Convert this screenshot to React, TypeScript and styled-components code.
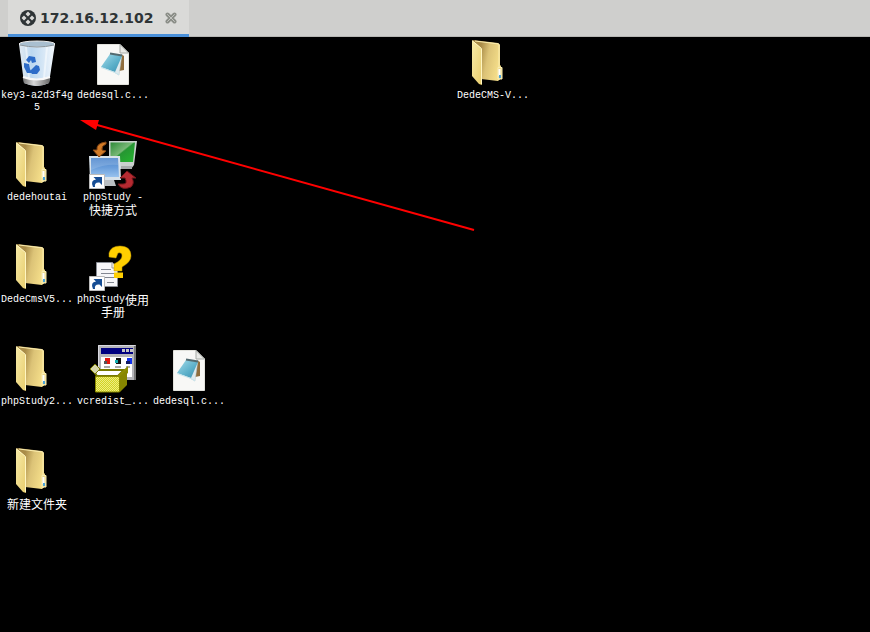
import React from "react";
import styled, { createGlobalStyle } from "styled-components";

const GlobalStyle = createGlobalStyle`
  * { box-sizing: border-box; }
  html, body, #root { height: 100%; }
  body { margin: 0; background: #000; }
  button { border: 0; padding: 0; background: none; color: inherit; cursor: default; }
`;

const Window = styled.div`
  display: flex;
  flex-direction: column;
  min-height: 100%;
  background: #000;
`;

const TabBar = styled.header`
  display: flex;
  flex: none;
  height: 37px;
  padding-left: 8px;
  background: #cfcfcd;
  border-bottom: 1px solid #b6b6b3;
`;

const Tab = styled.div`
  display: flex;
  align-items: center;
  gap: 12px;
  height: 37px;
  padding: 2px 12px 0;
  background: #dadad8;
  border-bottom: 3px solid #4a90d9;
`;

const TabTitle = styled.button`
  display: flex;
  align-items: center;
  gap: 4px;
  color: #2e3436;
  font: bold 14px/24px "DejaVu Sans", sans-serif;
`;

const CloseButton = styled.button`
  display: flex;
`;

const Desktop = styled.main`
  position: relative;
  flex: 1;
  display: grid;
  grid-template-columns: repeat(auto-fill, 74px);
  grid-auto-rows: 98px;
  gap: 4px 2px;
  align-content: start;
  padding-top: 2px;
`;

const Shortcut = styled.button<{ $column: number; $row: number }>`
  grid-column: ${(p) => p.$column};
  grid-row: ${(p) => p.$row};
  display: flex;
  flex-direction: column;
  align-items: center;
  gap: 3px;
  color: #fff;
`;

const Picture = styled.svg`
  display: block;
  flex: none;
  width: 48px;
  height: 48px;
`;

const Label = styled.span`
  display: flex;
  flex-direction: column;
  align-items: center;
`;

const Line = styled.span`
  display: flex;
  height: 12px;
  white-space: pre;
`;

const Latin = styled.span`
  font: 10px/12px "Liberation Mono", monospace;
`;

const Chinese = styled.span`
  font: 12px/12px "Noto Sans CJK SC", sans-serif;
`;

const Arrow = styled.svg`
  position: absolute;
  left: 80px;
  top: 80px;
  width: 396px;
  height: 116px;
  pointer-events: none;
`;

function Folder() {
  return (
    <Picture viewBox="0 0 48 48">
      <defs>
        <linearGradient id="folderBack" x1="0" x2="1" y1="0" y2=".3">
          <stop offset=".3" stopColor="#a98c48" />
          <stop offset=".6" stopColor="#dcc377" />
          <stop offset="1" stopColor="#f3dc88" />
        </linearGradient>
        <linearGradient id="folderFront" x1="0" x2="1" y1="0" y2="1">
          <stop offset="0" stopColor="#f7eba8" />
          <stop offset="1" stopColor="#e8cc6c" />
        </linearGradient>
      </defs>
      <path d="M4 1 29 4 31 6V26L32 27V39L29 42 12 40Z" fill="url(#folderBack)" />
      <path d="M6 2 30 5V41" fill="none" stroke="#fbedaf" />
      <path d="M29 28.500h4V40h-4z" fill="#ecd889" stroke="#f8edb6" />
      <path d="M30.500 30v7" stroke="#fff" strokeWidth="2" />
      <path d="M30 36h2v3h-2z" fill="#4ba3d8" />
      <path d="M3 1 12 9 13 46 10 45 3 37Z" fill="url(#folderFront)" />
      <path d="M3.500 2 12.500 9.500V45" fill="none" stroke="#fff6c2" />
    </Picture>
  );
}

function RecycleBin() {
  return (
    <Picture viewBox="0 0 48 48">
      <defs>
        <linearGradient id="binGlass" x1="0" x2="1">
          <stop offset="0" stopColor="#e3ebf2" />
          <stop offset=".35" stopColor="#bcd8f0" />
          <stop offset=".75" stopColor="#dceaf7" />
          <stop offset="1" stopColor="#f4f9fd" />
        </linearGradient>
        <linearGradient id="binBase" x1="0" x2="1">
          <stop offset="0" stopColor="#777" />
          <stop offset=".4" stopColor="#d8d8d8" />
          <stop offset="1" stopColor="#666" />
        </linearGradient>
      </defs>
      <path d="M6 5 11 44Q24 50 36 44L42 5Z" fill="url(#binGlass)" />
      <path d="M10 38Q24 43 37 38L36 44Q24 50 11 44Z" fill="url(#binBase)" />
      <path d="M10 38Q24 43 37 38" fill="none" stroke="#f8f8f8" strokeWidth="2" />
      <path d="M13 8 16 39M34 8 31 39" stroke="#fff" strokeOpacity=".5" strokeWidth="2" />
      <ellipse cx="24" cy="5" rx="18" ry="3" fill="#a9bfd0" stroke="#eee" />
      <path d="M7 6Q24 10 41 6" fill="none" stroke="#87939b" />
      <g fill="#2d6cc8">
        <path d="m13 21 3-4 6 1 1 5-4 1-1-3-2 3Z" />
        <path d="m11 24 5 1 1 5 2 4h-5l-3-6Z" />
        <path d="m19 30 4-4 3 1 1 4-3 4h-5l-2-3Z" />
      </g>
    </Picture>
  );
}

function ConfigFile() {
  return (
    <Picture viewBox="0 0 48 48">
      <defs>
        <linearGradient id="notepad" x1="0" x2="1" y1="0" y2="1">
          <stop offset="0" stopColor="#a5dcea" />
          <stop offset=".6" stopColor="#5aafc9" />
          <stop offset="1" stopColor="#3d8fb0" />
        </linearGradient>
      </defs>
      <path d="M8.500 5.500H31L39.500 14V45.500H8.500Z" fill="#f8f8f6" stroke="#e2e2dc" />
      <path d="M31 5.500V14h8.500Z" fill="#e8e9e6" stroke="#a6aaa6" />
      <path d="m32 15 3 2V31l-5 1Z" fill="#8f6d3d" />
      <path d="m33 15-3 21-9-5Z" fill="#dfeaee" stroke="#b6c8cd" strokeWidth=".5" />
      <path d="M21 15 33 17 26 33 12 28Z" fill="url(#notepad)" />
      <path d="M21 14.500 33 16.500" stroke="#526a70" strokeWidth="2" />
      <path d="M12 28.500 26 33.500 30 36" fill="none" stroke="#c9e6ee" />
    </Picture>
  );
}

const ShortcutMark = () => (
  <g>
    <path d="M.5 33.500h15v14H.500Z" fill="#fff" stroke="#bbb" />
    <path d="M4 46Q1 39 7 38.500L4.500 36h8.500v8l-2.500-2.500Q5 41 6 46Z" fill="#164d94" />
  </g>
);

function Network() {
  return (
    <Picture viewBox="0 0 48 48" overflow="visible">
      <defs>
        <linearGradient id="greenScreen" x1="0" x2="1" y1="0" y2="1">
          <stop offset="0" stopColor="#2d8a38" />
          <stop offset=".45" stopColor="#79b877" />
          <stop offset=".5" stopColor="#269633" />
          <stop offset="1" stopColor="#24b62e" />
        </linearGradient>
        <linearGradient id="blueScreen" x1="0" x2="0" y1="0" y2="1">
          <stop offset="0" stopColor="#4a83cb" />
          <stop offset=".5" stopColor="#6a9edb" />
          <stop offset="1" stopColor="#98c2ee" />
        </linearGradient>
      </defs>
      <path d="M20 0H48L45 24 42 28H28V17H20Z" fill="#c9d0cd" />
      <path d="M21.500 1.500H46L44 21H31V15H21.500Z" fill="url(#greenScreen)" />
      <path d="M32 25h11v3H32z" fill="#a7abac" />
      <path d="M0 15H31L32 39H1Z" fill="#d8e2ea" />
      <path d="M2 17H29L30 36H2Z" fill="url(#blueScreen)" />
      <path d="M2 17H29V24Q15 23 2 29Z" fill="#fff" opacity=".15" />
      <path d="M14 39h11l2 6H14Z" fill="#b9bec2" />
      <path d="M17 1Q7 2 8 9H4l6 7 7-6-4-1Q12 5 17 3Z" fill="#d27b27" stroke="#854615" />
      <path d="M29 43Q33 50 42 46Q46 42 43 37h4l-9-7-7 7h5Q39 43 34 43Z" fill="#b52a31" stroke="#70161b" />
      <ShortcutMark />
    </Picture>
  );
}

function Manual() {
  return (
    <Picture viewBox="0 0 48 48">
      <path d="M7.500 19.500H23L28.500 24V43.500H7.500Z" fill="#f6f6f8" stroke="#888c94" />
      <path d="M23 19.500V25h5" fill="#fff" stroke="#999" />
      <path d="M12 26.500h10M12 30.500h13M12 34.500h13M18 39.500h7" stroke="#838791" />
      <path d="M20 14V10Q22 3 31 3Q42 3 42 13Q42 19 33 24V28H25V21Q33 17 33 13Q33 9 29 10L27 15Z" fill="#ffcf00" stroke="#bf9700" strokeWidth=".5" />
      <path d="M25 29.500h9V35h-9z" fill="#ffcf00" />
      <ShortcutMark />
    </Picture>
  );
}

function Installer() {
  return (
    <Picture viewBox="0 0 48 48">
      <defs>
        <pattern id="boxDither" width="2" height="2" patternUnits="userSpaceOnUse">
          <path d="M0 0h2v2H0z" fill="#d4d422" />
          <path d="M0 0h1v1H0zM1 1h1v1H1z" fill="#eded83" />
        </pattern>
      </defs>
      <path d="M9 0H47V35H9Z" fill="#b4b4b8" />
      <path d="M9.500 34V.5H46" fill="none" stroke="#d8d8e0" />
      <path d="M46 1V35" stroke="#777" strokeWidth="2" />
      <path d="M12 3H44V9H12Z" fill="#000080" />
      <path d="M33 4h3v3h-3zM37 4h3v3h-3zM41 4h3v3h-3z" fill="#c4c4c4" />
      <path d="M12 12H43V32H12Z" fill="#fff" />
      <path d="M16 13h5v6h-5z" fill="#e2180e" />
      <path d="M15 16h3v3h-3z" fill="#555" />
      <path d="M27 13h5v6h-5z" fill="#111" />
      <path d="M26 15h3v3h-3z" fill="#14aeb1" />
      <path d="M38 13h5v6h-5z" fill="#1232ec" />
      <path d="M37 16h4v3h-4z" fill="#111b67" />
      <path d="M15 22h6M26 22h6M37 22h4" stroke="#aaa" strokeWidth="2" />
      <path d="M4 25H35L29 31H8Z" fill="#fff" stroke="#777900" strokeWidth="2" />
      <path d="m6 19 5 5-5 5-5-5Z" fill="#d5d5aa" stroke="#777900" />
      <path d="m28 31 11-10v7l-8 6Z" fill="#8e8e00" />
      <path d="M31 31 38 25V40l-7 7Z" fill="#868600" />
      <path d="M6.500 31.500h24V47h-24Z" fill="url(#boxDither)" stroke="#8b8b00" />
    </Picture>
  );
}

const pictures = { Folder, RecycleBin, ConfigFile, Network, Manual, Installer };

type Item = {
  column: number;
  row: number;
  picture: keyof typeof pictures;
  lines: string[];
};

const items: Item[] = [
  { column: 1, row: 1, picture: "RecycleBin", lines: ["key3-a2d3f4g", "5"] },
  { column: 2, row: 1, picture: "ConfigFile", lines: ["dedesql.c..."] },
  { column: 7, row: 1, picture: "Folder", lines: ["DedeCMS-V..."] },
  { column: 1, row: 2, picture: "Folder", lines: ["dedehoutai"] },
  { column: 2, row: 2, picture: "Network", lines: ["phpStudy -", "快捷方式"] },
  { column: 1, row: 3, picture: "Folder", lines: ["DedeCmsV5..."] },
  { column: 2, row: 3, picture: "Manual", lines: ["phpStudy使用", "手册"] },
  { column: 1, row: 4, picture: "Folder", lines: ["phpStudy2..."] },
  { column: 2, row: 4, picture: "Installer", lines: ["vcredist_..."] },
  { column: 3, row: 4, picture: "ConfigFile", lines: ["dedesql.c..."] },
  { column: 1, row: 5, picture: "Folder", lines: ["新建文件夹"] },
];

function LabelLine({ text }: { text: string }) {
  const runs = text.match(/[\x20-\x7e]+|[^\x20-\x7e]+/g) ?? [];
  return (
    <Line>
      {runs.map((run) =>
        run.charCodeAt(0) < 127 ? <Latin key={run}>{run}</Latin> : <Chinese key={run}>{run}</Chinese>
      )}
    </Line>
  );
}

export default function App() {
  return (
    <>
      <GlobalStyle />
      <Window>
        <TabBar>
          <Tab>
            <TabTitle>
              <svg width="16" height="16" viewBox="0 0 16 16" aria-hidden="true">
                <circle cx="8" cy="8" r="8" fill="#2e3436" />
                <path
                  d="m8 1.500 2.500 2.500L8 6.500 5.500 4ZM8 9.500l2.500 2.500L8 14.500 5.500 12ZM4 5.500 6.500 8 4 10.500 1.500 8ZM12 5.500 14.500 8 12 10.500 9.500 8Z"
                  fill="#dadad8"
                />
              </svg>
              172.16.12.102
            </TabTitle>
            <CloseButton aria-label="Close tab">
              <svg width="12" height="12" viewBox="0 0 12 12">
                <path d="m2.500 2.500 7 7m0-7-7 7" stroke="#8b8e88" strokeWidth="4" strokeLinecap="round" />
                <path d="m2.500 2.500 7 7m0-7-7 7" stroke="#c3c4c0" strokeWidth="1" strokeLinecap="round" />
              </svg>
            </CloseButton>
          </Tab>
        </TabBar>
        <Desktop>
          {items.map((item) => {
            const Icon = pictures[item.picture];
            return (
              <Shortcut key={`${item.column}-${item.row}`} $column={item.column} $row={item.row}>
                <Icon />
                <Label>
                  {item.lines.map((line) => (
                    <LabelLine key={line} text={line} />
                  ))}
                </Label>
              </Shortcut>
            );
          })}
          <Arrow viewBox="0 0 396 116" aria-hidden="true">
            <path d="M10 6 394 113" stroke="#f00" strokeWidth="2" />
            <path d="m0 3 19 0-3 10Z" fill="#f00" />
          </Arrow>
        </Desktop>
      </Window>
    </>
  );
}
